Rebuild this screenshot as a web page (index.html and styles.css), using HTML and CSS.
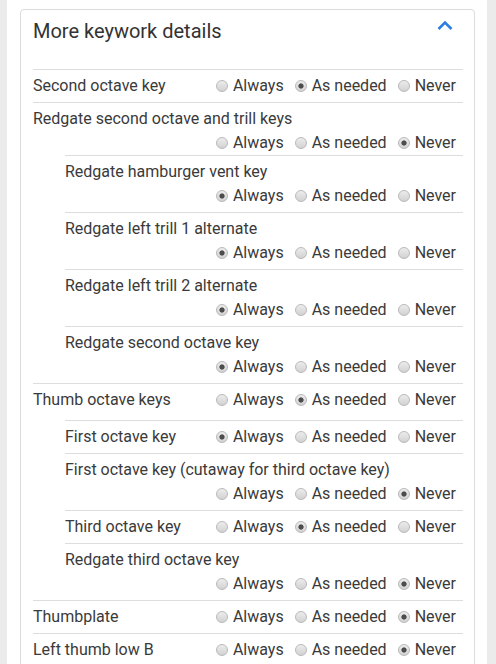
FILE: index.html
```html
<!DOCTYPE html>
<html lang="en">
<head>
<meta charset="utf-8">
<title>More keywork details</title>
<link rel="stylesheet" href="styles.css">
</head>
<body>
<div class="page">
  <section class="card">
    <header class="card-head">
      <h2 class="card-title">More keywork details</h2>
      <svg class="chevron" width="16" height="10" viewBox="0 0 16 10" aria-hidden="true"><polyline points="1.5,9 8,2.5 14.5,9" fill="none" stroke="#2f7de1" stroke-width="2.6" stroke-linejoin="miter"/></svg>
    </header>

    <div class="row">
      <span class="label">Second octave key</span>
      <span class="choices">
        <label class="opt"><input class="radio" type="radio" name="r1">Always</label>
        <label class="opt"><input class="radio" type="radio" name="r1" checked>As needed</label>
        <label class="opt"><input class="radio" type="radio" name="r1">Never</label>
      </span>
    </div>

    <div class="row stack parent-stack">
      <span class="label">Redgate second octave and trill keys</span>
      <span class="choices">
        <label class="opt"><input class="radio" type="radio" name="r2">Always</label>
        <label class="opt"><input class="radio" type="radio" name="r2">As needed</label>
        <label class="opt"><input class="radio" type="radio" name="r2" checked>Never</label>
      </span>
    </div>
    <div class="children">
      <div class="row stack">
        <span class="label">Redgate hamburger vent key</span>
        <span class="choices">
          <label class="opt"><input class="radio" type="radio" name="r3" checked>Always</label>
          <label class="opt"><input class="radio" type="radio" name="r3">As needed</label>
          <label class="opt"><input class="radio" type="radio" name="r3">Never</label>
        </span>
      </div>
      <div class="row stack">
        <span class="label">Redgate left trill 1 alternate</span>
        <span class="choices">
          <label class="opt"><input class="radio" type="radio" name="r4" checked>Always</label>
          <label class="opt"><input class="radio" type="radio" name="r4">As needed</label>
          <label class="opt"><input class="radio" type="radio" name="r4">Never</label>
        </span>
      </div>
      <div class="row stack">
        <span class="label">Redgate left trill 2 alternate</span>
        <span class="choices">
          <label class="opt"><input class="radio" type="radio" name="r5" checked>Always</label>
          <label class="opt"><input class="radio" type="radio" name="r5">As needed</label>
          <label class="opt"><input class="radio" type="radio" name="r5">Never</label>
        </span>
      </div>
      <div class="row stack">
        <span class="label">Redgate second octave key</span>
        <span class="choices">
          <label class="opt"><input class="radio" type="radio" name="r6" checked>Always</label>
          <label class="opt"><input class="radio" type="radio" name="r6">As needed</label>
          <label class="opt"><input class="radio" type="radio" name="r6">Never</label>
        </span>
      </div>
    </div>

    <div class="row parent-single">
      <span class="label">Thumb octave keys</span>
      <span class="choices">
        <label class="opt"><input class="radio" type="radio" name="r7">Always</label>
        <label class="opt"><input class="radio" type="radio" name="r7" checked>As needed</label>
        <label class="opt"><input class="radio" type="radio" name="r7">Never</label>
      </span>
    </div>
    <div class="children">
      <div class="row">
        <span class="label">First octave key</span>
        <span class="choices">
          <label class="opt"><input class="radio" type="radio" name="r8" checked>Always</label>
          <label class="opt"><input class="radio" type="radio" name="r8">As needed</label>
          <label class="opt"><input class="radio" type="radio" name="r8">Never</label>
        </span>
      </div>
      <div class="row stack">
        <span class="label">First octave key (cutaway for third octave key)</span>
        <span class="choices">
          <label class="opt"><input class="radio" type="radio" name="r9">Always</label>
          <label class="opt"><input class="radio" type="radio" name="r9">As needed</label>
          <label class="opt"><input class="radio" type="radio" name="r9" checked>Never</label>
        </span>
      </div>
      <div class="row">
        <span class="label">Third octave key</span>
        <span class="choices">
          <label class="opt"><input class="radio" type="radio" name="r10">Always</label>
          <label class="opt"><input class="radio" type="radio" name="r10" checked>As needed</label>
          <label class="opt"><input class="radio" type="radio" name="r10">Never</label>
        </span>
      </div>
      <div class="row stack">
        <span class="label">Redgate third octave key</span>
        <span class="choices">
          <label class="opt"><input class="radio" type="radio" name="r11">Always</label>
          <label class="opt"><input class="radio" type="radio" name="r11">As needed</label>
          <label class="opt"><input class="radio" type="radio" name="r11" checked>Never</label>
        </span>
      </div>
    </div>

    <div class="row">
      <span class="label">Thumbplate</span>
      <span class="choices">
        <label class="opt"><input class="radio" type="radio" name="r12">Always</label>
        <label class="opt"><input class="radio" type="radio" name="r12">As needed</label>
        <label class="opt"><input class="radio" type="radio" name="r12" checked>Never</label>
      </span>
    </div>
    <div class="row">
      <span class="label">Left thumb low B</span>
      <span class="choices">
        <label class="opt"><input class="radio" type="radio" name="r13">Always</label>
        <label class="opt"><input class="radio" type="radio" name="r13">As needed</label>
        <label class="opt"><input class="radio" type="radio" name="r13" checked>Never</label>
      </span>
    </div>
  </section>
</div>
</body>
</html>
```
FILE: styles.css
```css
html, body {
  margin: 0;
  padding: 0;
}
body {
  background: #ebebeb;
  font-family: Roboto, "Liberation Sans", Arial, sans-serif;
  color: #3a3a3a;
  padding: 0 9px 0 7px;
}
.page {
  background: #fff;
  padding: 9px 12px 20px 13px;
  min-height: 100vh;
  box-sizing: border-box;
}
.card {
  border: 1px solid #dcdcdc;
  border-radius: 4px;
  padding: 0 11px 0 12px;
}
.card-head {
  display: flex;
  justify-content: space-between;
  align-items: flex-start;
  padding: 9px 0 26px 0;
}
.card-title {
  margin: 0;
  font-size: 20px;
  line-height: 24px;
  font-weight: 400;
  color: #333;
}
.chevron {
  margin: 1px 10px 0 0;
  display: block;
}
.row {
  display: flex;
  flex-wrap: wrap;
  align-items: center;
  border-top: 1px solid #dddddd;
  padding: 4px 7px 4px 0;
  font-size: 16px;
  line-height: 24px;
}
.row.stack .label {
  width: 100%;
}
.row.parent-stack {
  padding-bottom: 0;
}
.row.parent-single {
  padding-bottom: 8px;
}
.children {
  margin-left: 32px;
}
.choices {
  margin-left: auto;
  display: flex;
  gap: 11px;
}
.opt {
  display: inline-flex;
  align-items: center;
  gap: 5px;
}
.radio {
  appearance: none;
  -webkit-appearance: none;
  margin: 0;
  width: 12px;
  height: 12px;
  border-radius: 50%;
  border: 1px solid #b9b9b9;
  background: linear-gradient(#ececec, #d2d2d2);
  box-sizing: border-box;
}
.radio:checked {
  background: radial-gradient(circle, #4d4d4d 0 2.2px, rgba(77,77,77,0) 3px), linear-gradient(#ececec, #d2d2d2);
}
```
